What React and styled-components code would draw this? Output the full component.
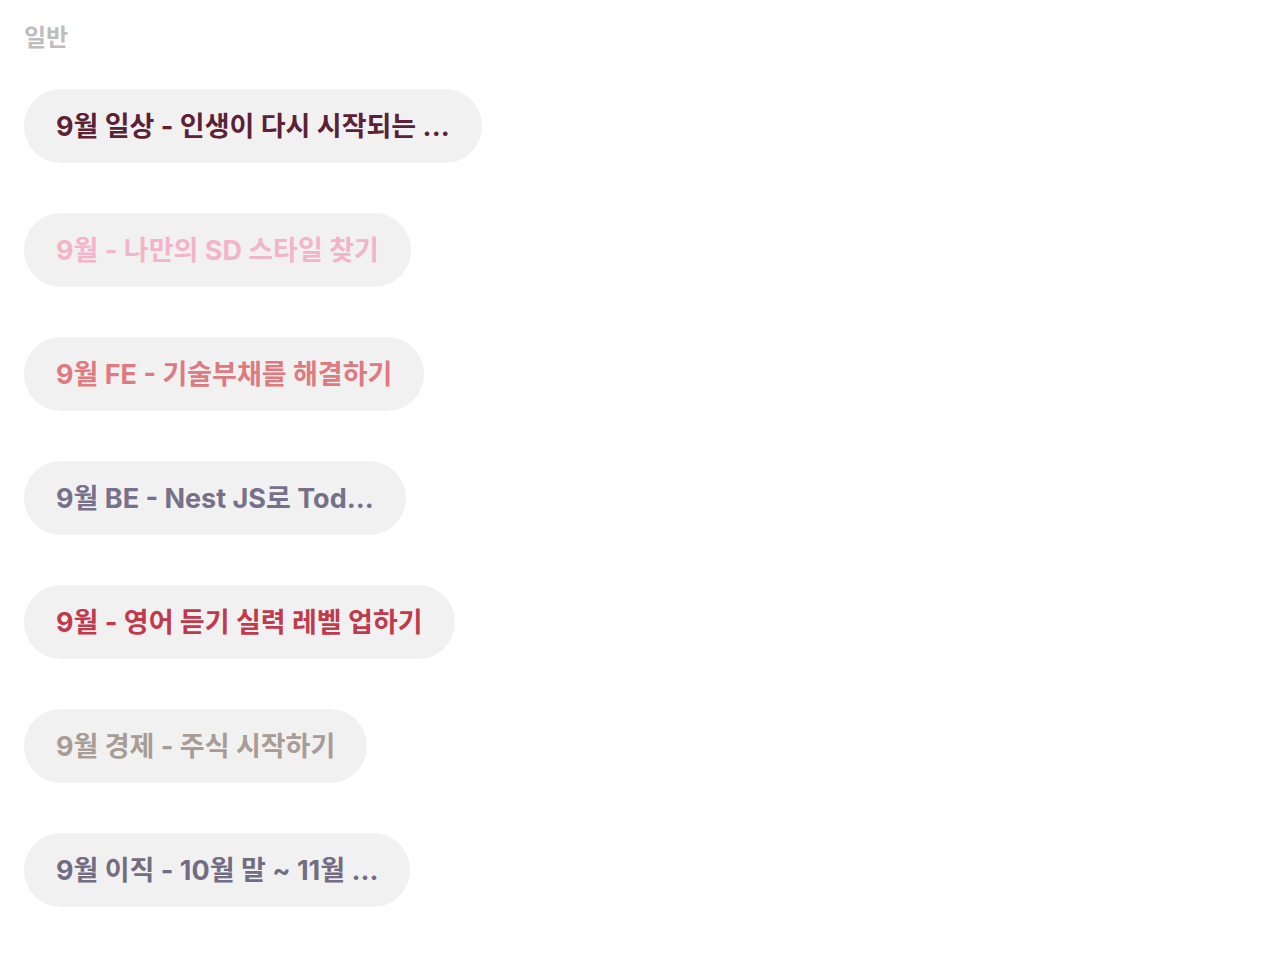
import React from "react";
import styled, { createGlobalStyle } from "styled-components";

const GlobalStyle = createGlobalStyle`
  body {
    margin: 0;
    background: #ffffff;
    font-family: Inter, "Noto Sans CJK KR", sans-serif;
  }
`;

const Page = styled.div`
  padding: 24px 24px;
  display: flex;
  flex-direction: column;
  align-items: flex-start;
`;

const SectionTitle = styled.h3`
  margin: 0 0 37px;
  font-size: 24px;
  line-height: 28px;
  font-weight: 700;
  color: #bdbdbd;
`;

const GoalList = styled.ul`
  list-style: none;
  margin: 0;
  padding: 0;
  display: flex;
  flex-direction: column;
  align-items: flex-start;
  gap: 50px;
`;

const GoalPill = styled.li`
  box-sizing: border-box;
  height: 74px;
  display: flex;
  align-items: center;
  padding: 0 32px 3px;
  border-radius: 37px;
  background: #f2f1f1;
  font-size: 27px;
  font-weight: 700;
  color: ${(p) => p.color};
  white-space: nowrap;
`;

const goals = [
  { id: 1, title: "9월 일상 - 인생이 다시 시작되는 ...", color: "#5b2236" },
  { id: 2, title: "9월 - 나만의 SD 스타일 찾기", color: "#f2b4c9" },
  { id: 3, title: "9월 FE - 기술부채를 해결하기", color: "#de7a80" },
  { id: 4, title: "9월 BE - Nest JS로 Tod...", color: "#77708a" },
  { id: 5, title: "9월 - 영어 듣기 실력 레벨 업하기", color: "#c03a4c" },
  { id: 6, title: "9월 경제 - 주식 시작하기", color: "#a89c96" },
  { id: 7, title: "9월 이직 - 10월 말 ~ 11월 ...", color: "#726d82" },
];

function App() {
  return (
    <Page>
      <GlobalStyle />
      <SectionTitle>일반</SectionTitle>
      <GoalList>
        {goals.map((goal) => (
          <GoalPill key={goal.id} color={goal.color}>
            {goal.title}
          </GoalPill>
        ))}
      </GoalList>
    </Page>
  );
}

export default App;
